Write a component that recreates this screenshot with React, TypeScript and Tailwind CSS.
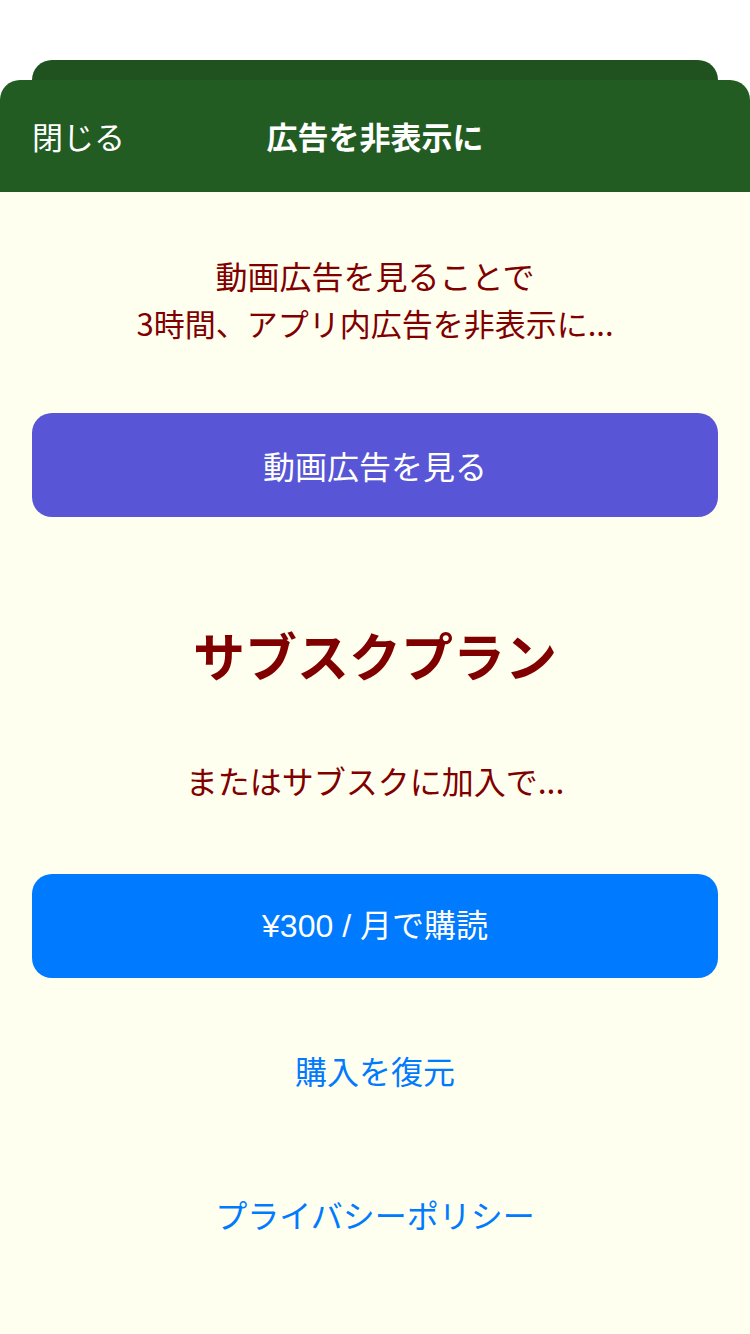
import React from "react";

const jp = { fontFamily: '"Noto Sans CJK JP", "Noto Sans", sans-serif' };
const latinJp = { fontFamily: '"Liberation Sans", "Noto Sans CJK JP", sans-serif' };

export default function App() {
    return (
        <div className="w-[750px] h-[1334px] bg-white flex flex-col pt-[60px]" style={jp}>
            <div className="mx-[32px] h-[20px] bg-[#20521f] rounded-t-[20px]" />
            <div className="flex-1 flex flex-col rounded-t-[20px] overflow-hidden">
                <div className="h-[112px] bg-[#235c23] grid grid-cols-[1fr_auto_1fr] items-center text-white text-[31px]">
                    <span className="pl-[32px]">閉じる</span>
                    <span className="font-bold">広告を非表示に</span>
                    <span />
                </div>
                <div className="flex-1 bg-[#fffff0] flex flex-col items-center text-center">
                    <p className="mt-[60px] text-[#800000] text-[32px] leading-[47px]">
                        動画広告を見ることで<br />
                        <span className="text-[31px]">3時間、アプリ内広告を非表示に...</span>
                    </p>
                    <button className="mt-[67px] w-[686px] h-[104px] rounded-[20px] bg-[#5856d6] text-white text-[32px]">
                        動画広告を見る
                    </button>
                    <h2 className="mt-[105px] text-[#800000] text-[52px] leading-[66px] font-bold">サブスクプラン</h2>
                    <p className="mt-[69px] text-[#800000] text-[32px] leading-[47px]">またはサブスクに加入で...</p>
                    <button className="mt-[70px] w-[686px] h-[104px] rounded-[20px] bg-[#007aff] text-white text-[32px]" style={latinJp}>
                        ¥300 / 月で購読
                    </button>
                    <p className="mt-[69px] text-[#007aff] text-[32px] leading-[47px]">購入を復元</p>
                    <p className="mt-[97px] text-[#007aff] text-[32px] leading-[47px]">プライバシーポリシー</p>
                </div>
            </div>
        </div>
    );
}
